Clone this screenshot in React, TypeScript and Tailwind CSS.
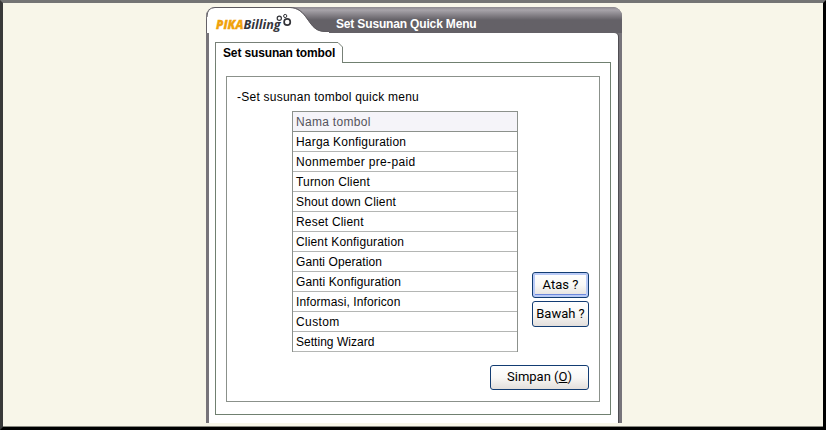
const rows = [
  { label: "Harga Konfiguration", tracking: "tracking-[0.18px]" },
  { label: "Nonmember pre-paid", tracking: "tracking-[0.34px]" },
  { label: "Turnon Client", tracking: "tracking-[0.18px]" },
  { label: "Shout down Client", tracking: "tracking-[0.15px]" },
  { label: "Reset Client", tracking: "tracking-[0.2px]" },
  { label: "Client Konfiguration", tracking: "tracking-[0.17px]" },
  { label: "Ganti Operation", tracking: "tracking-[0.08px]" },
  { label: "Ganti Konfiguration", tracking: "tracking-[0.12px]" },
  { label: "Informasi, Inforicon", tracking: "tracking-[0.12px]" },
  { label: "Custom", tracking: "tracking-[0.4px]" },
  { label: "Setting Wizard", tracking: "tracking-[0.03px]" },
];

const buttonBase =
  "flex items-center justify-center rounded-[3px] border border-[#123c72] bg-linear-to-b from-white via-[#f9f8f6] to-[#e3dfdc] pb-[2px] font-['Roboto','Liberation_Sans',sans-serif] text-[13px] leading-none font-normal text-black whitespace-nowrap";

function Logo() {
  return (
    <svg width="122" height="34" viewBox="0 0 122 34" className="block shrink-0">
      <path d="M0 34V10Q0 3 7 3H83C91 3 96 8 100 14C106 22 109 27 119 27H122V34Z" fill="#fff" />
      <path d="M0 12Q0 2.500 8 2.500H83C91 2.500 96 7.500 100 13.500C106 22 109 26.500 119 26.500H122" fill="none" stroke="#5c595e" />
      <g transform="translate(2 0)" fontFamily="Open Sans, sans-serif" fontSize="13" fontStyle="italic">
        <text x="7" y="24" textLength="27.500" lengthAdjust="spacingAndGlyphs" fontWeight="800" fill="#f0a20c" stroke="#f0a20c" strokeWidth=".3">PIKA</text>
        <text x="34.500" y="24" textLength="37" lengthAdjust="spacingAndGlyphs" fontWeight="700" fill="#33343b">Billing</text>
      </g>
      <g fill="none" stroke="#34353a">
        <circle cx="72.300" cy="13.300" r="2.100" strokeWidth="1.200" />
        <circle cx="78.200" cy="11" r="1.600" strokeWidth="1" />
        <circle cx="80.200" cy="17" r="3.100" strokeWidth="1.700" />
      </g>
    </svg>
  );
}

export default function App() {
  return (
    <div className="box-border flex h-[430px] w-[826px] justify-center overflow-hidden border-t-[3px] border-r-[3px] border-b-[3px] border-l-[3px] border-t-[#747474] border-r-black border-b-black border-l-[#393939] bg-[#f8f6e9] font-['Liberation_Sans',Arial,sans-serif] text-[12px] text-black shadow-[inset_0_-1px_0_#888880]">
      <div className="mt-1 mr-0 ml-[2px] flex h-[416px] w-[416px] flex-col overflow-hidden rounded-t-[9px] bg-[#77747a]">
        <div className="flex h-[26px] shrink-0 items-start bg-linear-to-b from-[#8d898f] from-0% via-[#a7a3a9] via-12% to-[#646167] to-50%">
          <div className="-mt-[2px] ml-[1px] h-[28px] w-[122px] shrink-0 overflow-hidden">
            <Logo />
          </div>
          <span className="mt-[9px] ml-[7px] text-[12px] leading-[16px] font-bold tracking-[-0.16px] whitespace-nowrap text-white">Set Susunan Quick Menu</span>
        </div>
        <div className="mr-[4px] ml-[3px] flex flex-1 flex-col rounded-tr-[4px] bg-white pt-[9px] pr-[7px] pb-[8px] pl-[6px] shadow-[1px_0_0_#4f4d52]">
          <div className="z-10 -mb-px flex h-[21px] w-[128px] shrink-0">
            <div className="flex flex-1 items-center border-t border-l border-[#778077] bg-white pl-[7px] text-[12px] font-bold tracking-[-0.14px] whitespace-nowrap">
              <span className="w-[115px]">Set susunan tombol</span>
            </div>
            <svg width="6" height="21" className="-ml-[6px] shrink-0">
              <path d="M0 0H6V21H0Z" fill="#fff" />
              <path d="M0 .5H1L5.500 5V21" fill="none" stroke="#778077" />
            </svg>
          </div>
          <div className="flex-1 border border-[#708070] pt-[13px] pr-[10px] pb-[12px] pl-[10px]">
            <div className="flex h-full flex-col border border-[#8b918b]">
              <p className="mt-[12px] ml-[10px] h-[16px] shrink-0 leading-[16px] tracking-[0.24px] whitespace-nowrap">-Set susunan tombol quick menu</p>
              <div className="mt-[6px] ml-[65px] flex shrink-0">
                <div className="w-[226px] border-t border-r border-l border-[#8c918c]">
                  <div className="h-[20px] border-b border-[#8c918c] bg-[#f5f4f9] pl-[3px] leading-[21px] tracking-[0.3px] text-[#54535b]">Nama tombol</div>
                  {rows.map((row) => (
                    <div key={row.label} className={`h-[20px] border-b border-[#b4b6b4] pl-[3px] leading-[21px] ${row.tracking}`}>{row.label}</div>
                  ))}
                </div>
                <div className="ml-[14px] flex w-[57px] flex-col gap-[3px] pt-[161px]">
                  <button className={`${buttonBase} h-[26px] shadow-[inset_0_0_0_2px_#b9caf6,inset_0_-3px_0_#6d88dc]`}>Atas ?</button>
                  <button className={`${buttonBase} h-[26px]`}>Bawah ?</button>
                </div>
              </div>
              <button className={`${buttonBase} mt-[13px] mr-[10px] h-[25px] w-[99px] shrink-0 self-end`}>
                <span>Simpan (<span className="underline underline-offset-1">O</span>)</span>
              </button>
            </div>
          </div>
        </div>
      </div>
    </div>
  );
}
